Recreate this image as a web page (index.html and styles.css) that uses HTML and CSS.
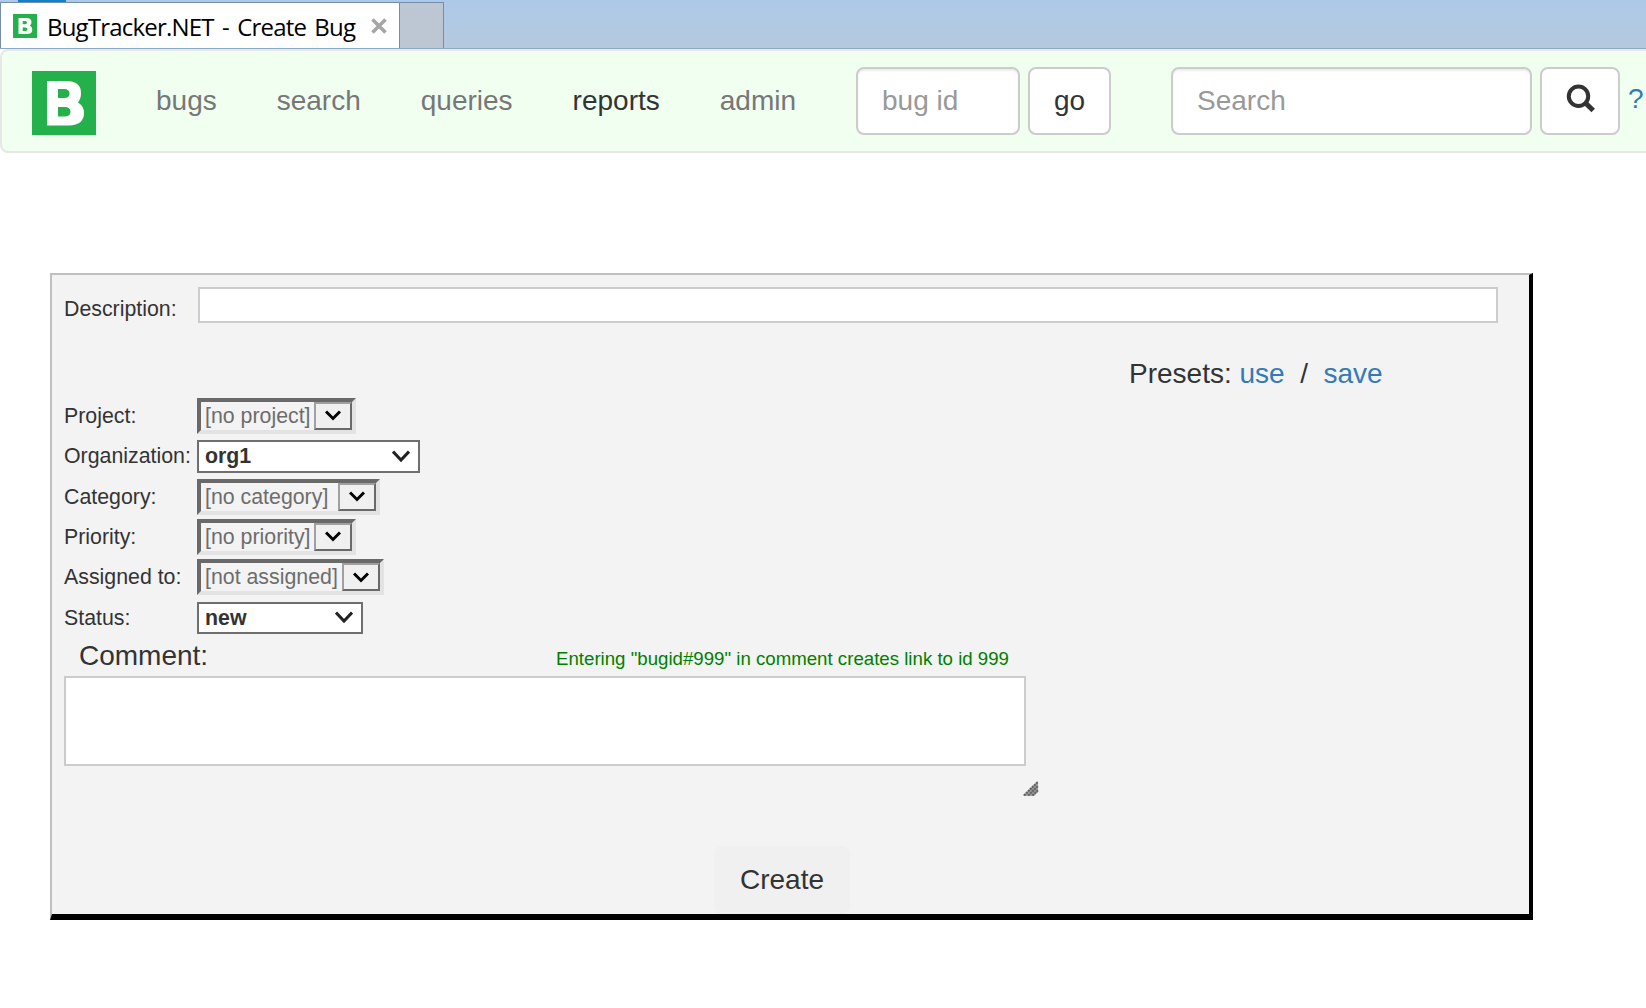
FILE: index.html
```html
<!DOCTYPE html>
<html lang="en">
<head>
<meta charset="utf-8">
<title>BugTracker.NET - Create Bug</title>
<link rel="stylesheet" href="styles.css">
</head>
<body>
<header class="tabstrip">
  <div class="tab">
    <svg class="favicon" viewBox="0 0 24 24"><rect width="24" height="24" fill="#24b04b"/><path fill="#fff" fill-rule="evenodd" d="M5.500 4H13.500Q18.500 4 18.500 8Q18.500 10.500 17 11.700Q19.300 12.800 19.300 15.700Q19.300 20 14 20H5.500ZM9.700 7V10.200H12.300Q14 10.200 14 8.600Q14 7 12.300 7ZM9.700 13.500V17H12.500Q14.500 17 14.500 15.200Q14.500 13.500 12.500 13.500Z"/></svg>
    <span class="tab-title">BugTracker.NET - Create Bug</span>
    <svg class="tab-close" viewBox="0 0 16 16"><path d="M1.500 1.500L14.500 14.500M14.500 1.500L1.500 14.500" stroke="#a6a6a6" stroke-width="3.600"/></svg>
  </div>
  <div class="new-tab"></div>
  <div class="window-icon"></div>
</header>
<nav class="navbar">
  <svg class="logo" viewBox="0 0 64 64"><rect width="64" height="64" fill="#24b04b"/><path fill="#fff" fill-rule="evenodd" d="M15 10H34Q49 10 49 22Q49 28 46 31.500Q52 35 52 42Q52 54 37 54.500H15ZM26 18V27H32Q37.500 27 37.500 22.500Q37.500 18 32 18ZM26 36V45.500H32.500Q38.500 45.500 38.500 40.700Q38.500 36 32.500 36Z"/></svg>
  <div class="links">
    <a>bugs</a><a>search</a><a>queries</a><a class="active">reports</a><a>admin</a>
  </div>
  <input class="field bug-id" placeholder="bug id">
  <button class="btn go">go</button>
  <input class="field query" placeholder="Search">
  <button class="btn find"><svg viewBox="0 0 30 30"><circle cx="12.500" cy="12.300" r="9.700" fill="none" stroke="#333" stroke-width="4"/><path d="M19 18.500L27.200 26.500" stroke="#333" stroke-width="5"/></svg></button>
  <a class="help">?</a>
</nav>
<main class="panel">
  <div class="description"><label>Description:</label><input class="plain"></div>
  <div class="presets">Presets: <a>use</a>&nbsp; /&nbsp; <a>save</a></div>
  <div class="attributes">
    <label>Project:</label>
    <div class="inset w-short"><span>[no project]</span><i><svg viewBox="0 0 16 11"><path d="M1 1.500L8 8.500L15 1.500"/></svg></i></div>
    <label>Organization:</label>
    <div class="select w-org"><span>org1</span><svg viewBox="0 0 18 13"><path d="M1 1.500L9 10L17 1.500"/></svg></div>
    <label>Category:</label>
    <div class="inset w-category"><span>[no category]</span><i><svg viewBox="0 0 16 11"><path d="M1 1.500L8 8.500L15 1.500"/></svg></i></div>
    <label>Priority:</label>
    <div class="inset w-short"><span>[no priority]</span><i><svg viewBox="0 0 16 11"><path d="M1 1.500L8 8.500L15 1.500"/></svg></i></div>
    <label>Assigned to:</label>
    <div class="inset w-assigned"><span>[not assigned]</span><i><svg viewBox="0 0 16 11"><path d="M1 1.500L8 8.500L15 1.500"/></svg></i></div>
    <label>Status:</label>
    <div class="select w-status"><span>new</span><svg viewBox="0 0 18 13"><path d="M1 1.500L9 10L17 1.500"/></svg></div>
  </div>
  <div class="comment-head"><span class="comment-title">Comment:</span><span class="hint">Entering "bugid#999" in comment creates link to id 999</span></div>
  <textarea class="plain comment"></textarea>
  <svg class="grip" viewBox="0 0 16 16"><path d="M0 15L15 0V11L11 15Z" fill="#a2a2a2"/><path d="M1 14.500L15 .8M5.200 14.500L15 5M9.400 14.500L15 9.200" stroke="#666" stroke-width="2.200" stroke-dasharray="2.200 .6"/></svg>
  <button class="create">Create</button>
</main>
</body>
</html>
```
FILE: styles.css
```css
* { box-sizing: border-box; }
body {
  margin: 0;
  width: 1646px;
  height: 1008px;
  overflow: hidden;
  background: #fff;
  color: #333;
  font: 28px/40px "Liberation Sans", Arial, sans-serif;
}
input, button, textarea { font: inherit; color: inherit; margin: 0; outline: 0; }
svg { display: block; flex: none; }
a { color: #337ab7; }

.tabstrip {
  position: relative;
  display: flex;
  height: 49px;
  padding-top: 2px;
  background: linear-gradient(#adc9e8, #b5c9de);
  border-bottom: 1px solid #8ea9c8;
}
.tab {
  display: flex;
  align-items: center;
  width: 400px;
  padding-left: 12px;
  background: #fff;
  border: 1px solid #768da9;
  border-bottom: 0;
}
.favicon { width: 24px; height: 24px; }
.tab-title {
  width: 312px;
  margin-left: 10px;
  padding-top: 2px;
  color: #000;
  font: 24px/44px "Open Sans", "Noto Sans", sans-serif;
  letter-spacing: -.8px;
  word-spacing: 2.8px;
  white-space: nowrap;
}
.tab-close { width: 16px; height: 16px; margin-left: 12px; }
.new-tab { width: 44px; background: #bdc6d3; border: 1px solid #768da9; border-width: 1px 1px 0 0; }
.window-icon { position: absolute; left: 18px; top: 0; width: 48px; height: 2px; background: #0c83c8; }

.navbar {
  display: flex;
  align-items: center;
  width: 1660px;
  height: 104px;
  padding-left: 30px;
  background: #f0fff0;
  border: 2px solid #e7e7e7;
  border-radius: 8px;
}
.logo { width: 64px; height: 64px; margin-top: 4px; }
.links { display: flex; margin-left: 30px; }
.links a { padding: 0 30px; color: #777; }
.links .active { color: #333; }
.field, .btn {
  height: 68px;
  background: #fff;
  border: 2px solid #ccc;
  border-radius: 8px;
}
.field { padding: 0 24px; box-shadow: inset 0 2px 2px rgba(0, 0, 0, .075); }
.field::placeholder { color: #999; opacity: 1; }
.btn { display: flex; align-items: center; justify-content: center; padding: 0; }
.bug-id { width: 164px; margin-left: 30px; }
.go { width: 83px; margin-left: 8px; }
.query { width: 361px; margin-left: 60px; }
.find { width: 80px; margin-left: 8px; }
.find svg { width: 30px; height: 30px; margin: 0 0 5px 1px; }
.help { margin: 0 0 4px 8px; }

.panel {
  display: flex;
  flex-direction: column;
  align-items: flex-start;
  width: 1483px;
  height: 647px;
  margin: 120px 0 0 50px;
  padding: 12px 12px 0;
  background: #f3f3f3;
  border: 2px solid silver;
  border-right: 4px solid #000;
  border-bottom: 6px solid #000;
}
label { font-size: 21.33px; white-space: nowrap; }
.plain { display: block; padding: 0; background: #fff; border: 2px solid #ccc; border-radius: 0; }
.description { display: flex; height: 36px; }
.description label { width: 134px; padding-top: 2px; }
.description .plain { width: 1300px; height: 36px; }
.presets { margin: 31px 0 0 1065px; white-space: pre; }
.attributes {
  display: grid;
  grid-template-columns: 133px auto;
  grid-auto-rows: 40.4px;
  align-items: center;
  justify-items: start;
  margin-top: 1.6px;
}
.inset, .select { display: flex; align-items: center; font-size: 21.33px; line-height: 28px; white-space: nowrap; }
.inset {
  justify-content: space-between;
  height: 36px;
  padding-left: 4px;
  border: 4px solid;
  border-color: #696969 #e3e3e3 #e3e3e3 #696969;
  color: #6d6d6d;
}
.inset i {
  display: flex;
  align-items: center;
  justify-content: center;
  width: 38px;
  height: 28px;
  background: #f0f0f0;
  border: 2px solid;
  border-color: #a0a0a0 #696969 #696969 #a0a0a0;
}
.inset svg { width: 16px; height: 11px; margin-right: 1px; }
.select svg { width: 18px; height: 13px; }
.inset path, .select path { fill: none; stroke: #000; stroke-width: 3; }
.select path { stroke: #222; }
.select {
  justify-content: space-between;
  height: 32px;
  padding: 0 8px 0 6px;
  background: #fff;
  border: 2px solid #6f6f6f;
  font-weight: bold;
}
.w-short { width: 159px; }
.w-org { width: 223px; height: 33px; }
.w-category { width: 183px; }
.w-assigned { width: 187px; }
.w-status { width: 166px; }
.comment-head { display: flex; align-items: baseline; height: 38.4px; padding-left: 15px; }
.comment-title { width: 477px; line-height: 36px; }
.hint { color: green; font-size: 18.67px; white-space: nowrap; }
.comment { width: 962px; height: 90px; resize: none; }
.grip { width: 16px; height: 16px; margin: 15px 0 0 959px; }
.create {
  width: 136px;
  height: 68px;
  margin: 49px 0 0 650px;
  padding: 0;
  background: #f0f0f0;
  border: 0;
  border-radius: 8px;
}
```
